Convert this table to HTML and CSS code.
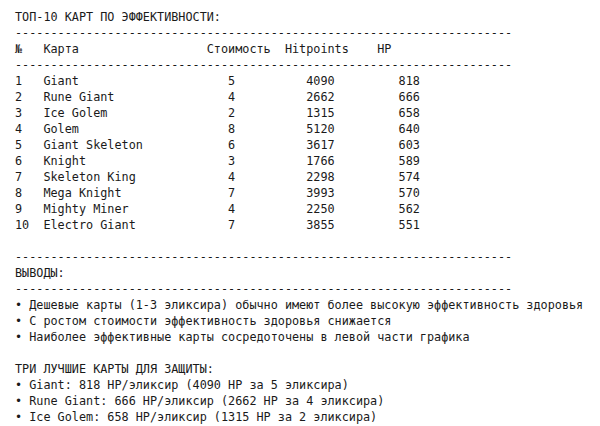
FILE: index.html
```html
<!DOCTYPE html>
<html lang="ru">
<head>
<meta charset="utf-8">
<title>ТОП-10 карт</title>
<link rel="stylesheet" href="styles.css">
</head>
<body>
<pre class="console">ТОП-10 КАРТ ПО ЭФФЕКТИВНОСТИ:
----------------------------------------------------------------------
№   Карта                  Стоимость  Hitpoints    HP
----------------------------------------------------------------------
1   Giant                     5          4090         818
2   Rune Giant                4          2662         666
3   Ice Golem                 2          1315         658
4   Golem                     8          5120         640
5   Giant Skeleton            6          3617         603
6   Knight                    3          1766         589
7   Skeleton King             4          2298         574
8   Mega Knight               7          3993         570
9   Mighty Miner              4          2250         562
10  Electro Giant             7          3855         551

----------------------------------------------------------------------
ВЫВОДЫ:
----------------------------------------------------------------------
• Дешевые карты (1-3 эликсира) обычно имеют более высокую эффективность здоровья
• С ростом стоимости эффективность здоровья снижается
• Наиболее эффективные карты сосредоточены в левой части графика

ТРИ ЛУЧШИЕ КАРТЫ ДЛЯ ЗАЩИТЫ:
• Giant: 818 HP/эликсир (4090 HP за 5 эликсира)
• Rune Giant: 666 HP/эликсир (2662 HP за 4 эликсира)
• Ice Golem: 658 HP/эликсир (1315 HP за 2 эликсира)</pre>
</body>
</html>
```

FILE: styles.css
```css
html, body {
  margin: 0;
  background: #ffffff;
}

body {
  padding: 9px 15px 0;
}

.console {
  margin: 0;
  font-family: "DejaVu Sans Mono", "Liberation Mono", monospace;
  font-size: 11.8px;
  line-height: 16px;
  color: #1a1a1a;
  white-space: pre;
}
```
